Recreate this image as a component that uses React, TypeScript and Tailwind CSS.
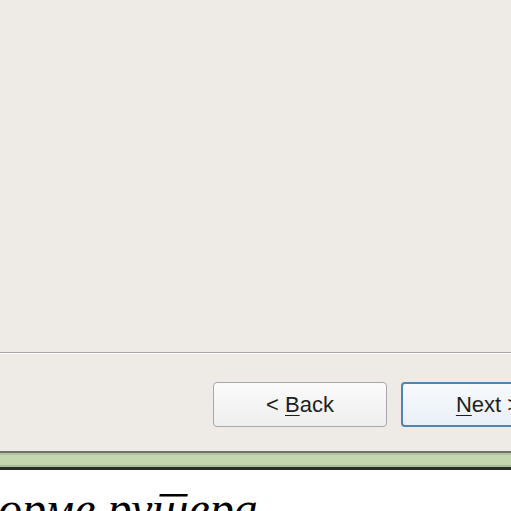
export default function App() {
  return (
    <div className="flex h-[511px] w-[511px] flex-col overflow-hidden bg-white">
      <div className="h-[352px] shrink-0 bg-[#eeebe6]" />
      <div className="h-px shrink-0 bg-[#a9a7a3]" />
      <div className="h-px shrink-0 bg-white" />
      <div className="flex h-[97px] shrink-0 gap-[14px] overflow-hidden bg-[#eeebe6] pl-[213px] pt-[28px]">
        <button className="flex h-[45px] w-[174px] shrink-0 items-center justify-center rounded-[4px] border border-[#a8a8a8] bg-gradient-to-b from-[#fbfbfb] to-[#eeeeee] font-['Liberation_Sans',sans-serif] text-[22px] text-[#1e1e1e]">
          &lt;&nbsp;<span className="underline decoration-1 underline-offset-[3px]">B</span>ack
        </button>
        <button className="flex h-[45px] w-[174px] shrink-0 items-center justify-center rounded-[4px] border-2 border-[#4d85b5] bg-gradient-to-b from-[#f7fafd] to-[#e9f0f6] font-['Liberation_Sans',sans-serif] text-[22px] text-[#1e1e1e]">
          <span className="underline decoration-1 underline-offset-[3px]">N</span>ext&nbsp;&gt;
        </button>
      </div>
      <div className="h-[2px] shrink-0 bg-[#6e7468]" />
      <div className="h-[2px] shrink-0 bg-[#b4c3a6]" />
      <div className="h-[10px] shrink-0 bg-[#c4d8b0]" />
      <div className="h-[2px] shrink-0 bg-[#a9bd98]" />
      <div className="h-[3px] shrink-0 bg-[#2a2e28]" />
      <div className="flex-1 overflow-hidden bg-white pt-[15px]">
        <p lang="sr" className="-ml-[2px] whitespace-nowrap font-['Liberation_Serif',serif] text-[48px] leading-none text-black italic">
          орме рутера
        </p>
      </div>
    </div>
  );
}
